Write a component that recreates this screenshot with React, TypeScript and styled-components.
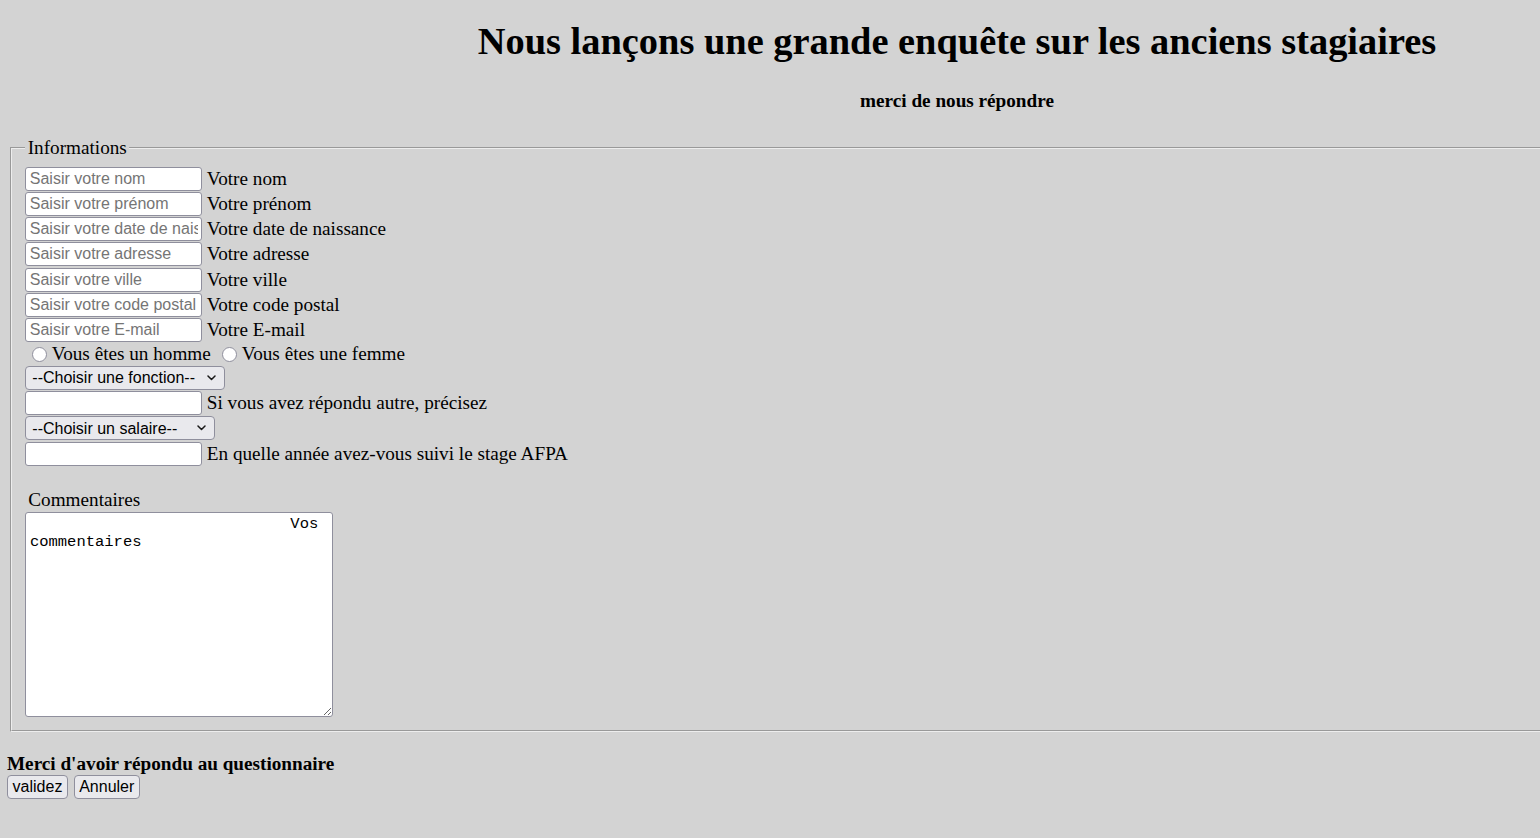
import React from "react";
import styled, { createGlobalStyle } from "styled-components";

const GlobalStyle = createGlobalStyle`
  body {
    margin: 0;
    background: #d3d3d3;
    color: #000;
    font-family: "Liberation Serif", "Times New Roman", serif;
    font-size: 19.2px;
  }
`;

const Chevron = () => (
  <svg width="9" height="6" viewBox="0 0 9 6" fill="none">
    <path d="M1 1l3.5 3.5L8 1" stroke="#1a1a1a" strokeWidth="1.5" strokeLinecap="round" strokeLinejoin="round" />
  </svg>
);

const fields = [
  { placeholder: "Saisir votre nom", label: "Votre nom" },
  { placeholder: "Saisir votre prénom", label: "Votre prénom" },
  { placeholder: "Saisir votre date de naissance", label: "Votre date de naissance" },
  { placeholder: "Saisir votre adresse", label: "Votre adresse" },
  { placeholder: "Saisir votre ville", label: "Votre ville" },
  { placeholder: "Saisir votre code postal", label: "Votre code postal" },
  { placeholder: "Saisir votre E-mail", label: "Votre E-mail" },
];

const App = (): React.ReactElement => {
  return (
    <Page>
      <GlobalStyle />
      <Header>
        <Title>Nous lançons une grande enquête sur les anciens stagiaires</Title>
        <Subtitle>merci de nous répondre</Subtitle>
      </Header>

      <form onSubmit={(e) => e.preventDefault()}>
        <Fieldset>
          <Legend>Informations</Legend>
          {fields.map((field) => (
            <Row key={field.label}>
              <TextInput type="text" placeholder={field.placeholder} />
              <span>{field.label}</span>
            </Row>
          ))}
          <RadioRow>
            <Radio type="radio" name="sexe" id="homme" />
            <RadioLabel htmlFor="homme">Vous êtes un homme</RadioLabel>
            <Radio type="radio" name="sexe" id="femme" />
            <RadioLabel htmlFor="femme">Vous êtes une femme</RadioLabel>
          </RadioRow>
          <Row>
            <SelectBox $width={200}>
              <Select defaultValue="">
                <option value="">--Choisir une fonction--</option>
                <option value="dev">Développeur</option>
                <option value="autre">Autre</option>
              </Select>
              <Arrow><Chevron /></Arrow>
            </SelectBox>
          </Row>
          <Row>
            <TextInput type="text" />
            <span>Si vous avez répondu autre, précisez</span>
          </Row>
          <Row>
            <SelectBox $width={190}>
              <Select defaultValue="">
                <option value="">--Choisir un salaire--</option>
                <option value="1">Moins de 20 000 €</option>
                <option value="2">Plus de 20 000 €</option>
              </Select>
              <Arrow><Chevron /></Arrow>
            </SelectBox>
          </Row>
          <Row>
            <TextInput type="text" />
            <span>En quelle année avez-vous suivi le stage AFPA</span>
          </Row>
          <CommentLabel htmlFor="comments">Commentaires</CommentLabel>
          <Comments
            id="comments"
            defaultValue={" ".repeat(28) + "Vos commentaires"}
          />
        </Fieldset>

        <Thanks>Merci d'avoir répondu au questionnaire</Thanks>
        <Buttons>
          <Button type="submit">validez</Button>
          <Button type="reset">Annuler</Button>
        </Buttons>
      </form>
    </Page>
  );
};

const Page = styled.div`
  padding: 0 0 40px 7px;
  overflow: hidden;
`;

const Header = styled.header`
  padding-left: 367px;
  text-align: center;
`;

const Title = styled.h1`
  margin: 19px 0 26.5px;
  font-size: 38.4px;
  font-weight: bold;
  line-height: normal;
`;

const Subtitle = styled.h4`
  margin: 0 0 25.5px;
  font-size: 19.2px;
  font-weight: bold;
  line-height: normal;
`;

const Fieldset = styled.fieldset`
  width: 1700px;
  margin: 0 0 0 2.5px;
  padding: 7px 13.8px 13.5px;
  border: 2px groove #ededed;
`;

const Legend = styled.legend`
  padding: 0 2.4px;
  font-size: 19.2px;
  line-height: normal;
`;

const Row = styled.div`
  display: flex;
  align-items: center;
  gap: 4.5px;
  height: 25.25px;
  white-space: nowrap;
`;

const TextInput = styled.input`
  box-sizing: border-box;
  width: 177px;
  height: 24px;
  margin: 0;
  padding: 0 3.5px;
  border: 1px solid #8f8f9d;
  border-radius: 3px;
  background: #fff;
  font-family: "Liberation Sans", Arial, sans-serif;
  font-size: 16px;
  color: #000;
  outline: none;

  &::placeholder {
    color: #757575;
  }
`;

const RadioRow = styled.div`
  display: flex;
  align-items: center;
  height: 22.5px;
  white-space: nowrap;
`;

const Radio = styled.input`
  appearance: none;
  box-sizing: border-box;
  flex-shrink: 0;
  width: 15px;
  height: 15px;
  margin: 0 5px 0 6.5px;
  border: 1px solid #8f8f9d;
  border-radius: 50%;
  background: #fff;

  &:checked {
    border: 4px solid #0060df;
  }
`;

const RadioLabel = styled.label`
  margin-right: 4.5px;
`;

const SelectBox = styled.div<{ $width: number }>`
  position: relative;
  width: ${(p) => p.$width}px;
  height: 24px;
`;

const Select = styled.select`
  appearance: none;
  box-sizing: border-box;
  width: 100%;
  height: 100%;
  margin: 0;
  padding: 0 0 0 6px;
  border: 1px solid #8f8f9d;
  border-radius: 4px;
  background: #e9e9ed;
  font-family: "Liberation Sans", Arial, sans-serif;
  font-size: 16px;
  color: #000;
  outline: none;
`;

const Arrow = styled.span`
  position: absolute;
  right: 9.5px;
  top: 9px;
  display: flex;
  pointer-events: none;
`;

const CommentLabel = styled.label`
  display: block;
  margin: 23px 0 0 3px;
  line-height: 22.5px;
`;

const Comments = styled.textarea`
  display: block;
  box-sizing: border-box;
  width: 308px;
  height: 205px;
  margin: 0;
  padding: 2.4px 2.4px 2.4px 3.6px;
  border: 1px solid #8f8f9d;
  border-radius: 3px;
  background: #fff;
  font-family: "Liberation Mono", "Courier New", monospace;
  font-size: 15.5px;
  line-height: normal;
  color: #000;
  outline: none;
`;

const Thanks = styled.p`
  margin: 20.5px 0 0;
  font-weight: bold;
  line-height: normal;
`;

const Buttons = styled.div`
  display: flex;
  gap: 5.6px;
`;

const Button = styled.button`
  box-sizing: border-box;
  height: 24px;
  padding: 0 4.6px;
  border: 1px solid #8f8f9d;
  border-radius: 4px;
  background: #e9e9ed;
  font-family: "Liberation Sans", Arial, sans-serif;
  font-size: 16px;
  color: #000;
  cursor: pointer;
`;

export default App;
